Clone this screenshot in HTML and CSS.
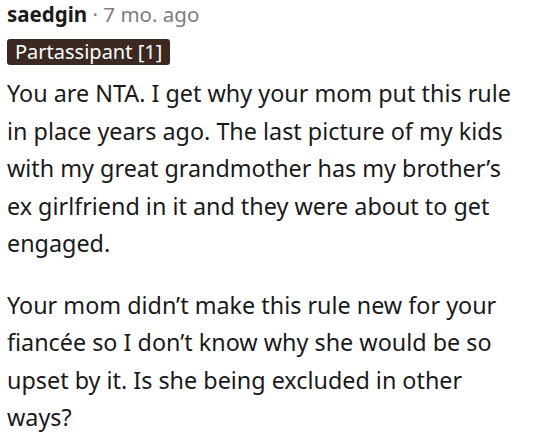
FILE: index.html
```html
<!DOCTYPE html>
<html>
<head>
<meta charset="utf-8">
<link rel="stylesheet" href="styles.css">
</head>
<body>
<div class="comment">
  <div class="meta"><span class="author">saedgin</span><span class="sep"> · </span><span class="time">7 mo. ago</span></div>
  <div class="flair-row"><span class="flair">Partassipant [1]</span></div>
  <div class="body">
    <p>You are NTA. I get why your mom put this rule in place years ago. The last picture of my kids with my great grandmother has my brother’s ex girlfriend in it and they were about to get engaged.</p>
    <p>Your mom didn’t make this rule new for your fiancée so I don’t know why she would be so upset by it. Is she being excluded in other ways?</p>
  </div>
</div>
</body>
</html>
```
FILE: styles.css
```css
html, body { margin: 0; padding: 0; background: #ffffff; }
body { width: 546px; height: 438px; overflow: hidden; }
.comment { padding: 0 24px 0 7px; }
.meta { font-family: "Noto Sans", sans-serif; font-size: 20.5px; line-height: 28px; color: #1c1c1c; }
.author { font-weight: 700; color: #1a1a1b; }
.sep, .time { color: #7c7c7c; }
.flair-row { margin-top: 11px; height: 26px; display: flex; align-items: stretch; }
.flair { background: #3b2922; color: #ffffff; font-family: "Noto Sans", sans-serif; font-size: 20px; line-height: 26px; padding: 0 8px; border-radius: 3px; }
.body { font-family: "Noto Sans", sans-serif; font-size: 23.35px; line-height: 37.5px; color: #1a1a1b; margin-top: 10px; }
.body p { margin: 0 0 24px 0; }
.body p:last-child { margin-bottom: 0; }
```
